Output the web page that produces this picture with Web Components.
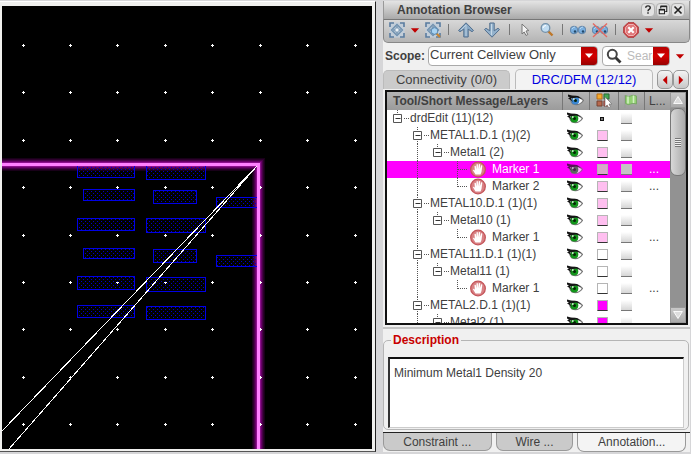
<!DOCTYPE html>
<html lang="en">
<head>
<meta charset="utf-8">
<title>Annotation Browser</title>
<style>
html, body { height: 100%; }
body { margin: 0; background: #d6d6d8; overflow: hidden; font: 12px/16px "Liberation Sans", Arial, sans-serif; color: #404040; }
</style>
</head>
<body>
<cad-window>
  <layout-canvas slot="canvas"></layout-canvas>
  <annotation-title slot="panel">Annotation Browser</annotation-title>
  <annotation-toolbar slot="panel"></annotation-toolbar>
  <scope-bar slot="panel"></scope-bar>
  <view-tabs slot="panel"></view-tabs>
  <result-tree slot="panel"></result-tree>
  <message-box slot="panel" label="Description">Minimum Metal1 Density 20</message-box>
  <dock-tabs slot="panel"></dock-tabs>
</cad-window>
<script>
const BASE = `<style>
:host,*{box-sizing:border-box}
button,input,select,textarea{font:inherit;color:inherit;margin:0;padding:0;border:0;background:none;border-radius:0}
button{display:flex;align-items:center;justify-content:center}
button:focus-visible,input:focus-visible,select:focus-visible{outline:1px dotted #333}
svg{display:block}
</style>`;
const define = (name, html, setup) => customElements.define(name, class extends HTMLElement {
  connectedCallback() {
    if (this.shadowRoot) return;
    const root = this.attachShadow({ mode: 'open' });
    root.innerHTML = BASE + (typeof html === 'function' ? html(this) : html);
    if (setup) setup(this, root);
  }
});

const frame = `<rect x=".5" y=".5" width="15" height="15" fill="#c3ced9"/><g fill="none" stroke="#5b7c9f" stroke-width="1.6"><path d="M1 5V1h4M11 1h4v4M15 11v4h-4M5 15H1v-4"/></g><path d="M8 2.500 13.500 8 8 13.500 2.500 8Z" fill="#dce5ec" stroke="#6d8ead" stroke-width="1.300"/><path d="M8 4v8M4 8h8" stroke="#6d8ead" stroke-width="1.500"/><path d="M6 6h4v4H6Z" fill="#edf2f6" stroke="#7d9ab5"/>`;
const eyes = `<g stroke="#55779b" stroke-width=".8"><circle cx="4" cy="8" r="3.800" fill="#79aede"/><circle cx="12" cy="8" r="3.800" fill="#79aede"/></g><circle cx="5" cy="9.500" r="1.200" fill="#234869"/><circle cx="13" cy="9.500" r="1.200" fill="#234869"/><path d="M2 7q1-2 3-2M10 7q1-2 3-2" stroke="#b9daf5" fill="none"/>`;
const eye = c => `<path d="M2 5Q9 1 15.500 7.500 11 13.500 5 11 3 9 2 5Z" fill="#fff" stroke="#777" stroke-width="1.200"/><circle cx="7.300" cy="7.500" r="4" fill="${c}"/><circle cx="7.500" cy="7.500" r="1.500" fill="#062306"/><circle cx="5.800" cy="6" r=".9" fill="#dff5df"/><path d="M0 1.500 4 2.500 10 3 14 6 9 4.500 3 5.500 5 9 2 6.500 0 5.500 2 4.500 0 3.500Z" fill="#151515"/>`;
const ICONS = {
  fit: frame,
  fitzoom: frame + `<path d="m11 11 4 4" stroke="#c68432" stroke-width="2.200"/><circle cx="9.500" cy="9" r="3.300" fill="#a9d3f2" stroke="#5989b2"/>`,
  up: `<path d="M8 .8 15.500 8.500l-1.500 1.200-3.800-2.500V15H5.800V7.200L2 9.700.5 8.500Z" fill="#88a8c5" stroke="#526f8e"/><path d="M8 3v11M3 8l5-5" stroke="#bfd2e2" fill="none"/>`,
  down: `<path d="M8 15.200.5 7.500 2 6.300l3.800 2.500V1h4.400v7.800L14 6.300l1.500 1.200Z" fill="#94b2cc" stroke="#526f8e"/><path d="M7.500 2v11" stroke="#c7d9e7"/>`,
  cursor: `<path d="M5 2v10l2.200-2 1.800 3.500 1.800-1L9 9l2.800-.5Z" fill="#f3f3f3" stroke="#777"/>`,
  zoom: `<path d="m9 9 4.500 4.500" stroke="#bd772a" stroke-width="2.400"/><circle cx="6.500" cy="6" r="4.300" fill="#c0dcf1" stroke="#7391aa" stroke-width="1.300"/><path d="M4 6q.5-2.500 3-2.500" stroke="#fff" fill="none"/>`,
  eyes,
  noeyes: eyes + `<path d="M1 1.500 15 15M15 1.500 1 15" stroke="#e36a62" stroke-width="1.400"/>`,
  clear: `<path d="M5 .7h6L15.300 5v6L11 15.300H5L.7 11V5Z" fill="#d24e50" stroke="#ae3a3d"/><path d="M5.500 2.500h5l3 3v5l-3 3h-5l-3-3v-5Z" fill="#e0787a" stroke="#efb3b3"/><path d="m5.300 5.300 5.400 5.400m0-5.400-5.400 5.400" stroke="#fff" stroke-width="2.200"/>`,
  drop: `<path d="M2.500 5.500h11l-5.500 6Z" fill="#c00000"/>`,
  wdrop: `<path d="M4 5.500h8l-4 4.500Z" fill="#fff"/>`,
  search: `<path d="m9.500 9.500 5 5" stroke="#333" stroke-width="2.800"/><circle cx="6.300" cy="6.300" r="4.500" fill="#fff" stroke="#444" stroke-width="2"/>`,
  help: `<path d="M5 5q0-2.500 3-2.500T11 5q0 1.500-1.500 2.300T8 9.500M8 11v2" fill="none" stroke="#222" stroke-width="1.900"/>`,
  restore: `<path d="M5 6V3h8v7h-2" fill="none" stroke="#222" stroke-width="1.400"/><path d="M5 3.200h8" stroke="#222" stroke-width="2"/><path d="M3 7.500h7V13H3Z" fill="#eee" stroke="#222" stroke-width="1.400"/><path d="M3 7.500h7" stroke="#222" stroke-width="2"/>`,
  close: `<path d="m4 4 8 8m0-8-8 8" stroke="#222" stroke-width="1.900"/>`,
  left: `<path d="M10.500 3v10L5.500 8Z" fill="#c00000"/>`,
  right: `<path d="M5.500 3v10l5-5Z" fill="#c00000"/>`,
  sup: `<path d="M3 12h10L8 4Z" fill="#ddd" stroke="#fff"/>`,
  sdown: `<path d="M3 4h10l-5 8Z" fill="#ddd" stroke="#fff"/>`,
  eyeg: eye('#12961a'),
  eyeb: eye('#3a86d2'),
  layers: `<path d="M1 1h5v5H1Z" fill="#f5ab2c" stroke="#b96d12"/><path d="M8 1h5v5H8Z" fill="#45a852" stroke="#2a6d35"/><path d="M1 8h5v5H1Z" fill="#b7694d" stroke="#774333"/><path d="M8 8h5v5H8Z" fill="#d35745" stroke="#903126"/><path d="M9 4v10l2.200-2 1.600 3 1.700-1-1.500-3H16Z" fill="#fff" stroke="#777" stroke-width=".7"/>`,
  flag: `<path d="M2 2v13" stroke="#999"/><path d="M2.500 2.500q3 2 5 .5t6 0v8q-4-1.500-6 0t-5-.5Z" fill="#93d073" stroke="#79a965"/><path d="M5 3.500v7M10.500 2.500v7.500" stroke="#d2f0c2" stroke-width="1.600"/>`,
  hand: `<circle cx="8" cy="8" r="7.300" fill="#d98184" stroke="#c4555a" stroke-width="1.300"/><path d="M5.500 13 2.800 8.600q.9-.9 2 .6L4.500 4.600q.8-.9 1.300 0L6.400 8 6.500 3q.8-.9 1.400 0L8 7.800 8.800 2.800q.9-.8 1.400.1L9.800 8l1.200-4q.9-.7 1.300.3l-.8 6.200-1 2.500Z" fill="#fff"/>`
};
const icon = (n, s = 16) => `<svg width="${s}" height="${s}" viewBox="0 0 16 16" aria-hidden="true">${ICONS[n]}</svg>`;

define('cad-window', `<style>
:host{display:grid;grid-template-columns:minmax(0,1fr) 307px;grid-template-rows:minmax(0,1fr);column-gap:7px;height:100vh;padding:1px 1px 2px 0}
.view{display:flex;min-height:0;background:#f0f0ee;border-right:1px solid #222;border-bottom:1px solid #555;border-top:1px solid #fff;padding:4px 3px 2px 2px}
.panel{display:flex;flex-direction:column;min-height:0;background:#f0f0f0}
</style><main class="view"><slot name="canvas"></slot></main><aside class="panel"><slot name="panel"></slot></aside>`);

define('layout-canvas', () => {
  const shapes = [[77,164,57,13],[77,218,57,12],[77,276,57,13],[77,305,57,12],[83,189,51,11],[83,248,51,10],
    [146,164,59,15],[146,218,59,14],[146,277,59,14],[146,306,59,13],[153,190,43,13],[153,249,43,13],[216,197,41,10],[216,255,41,11]];
  let dots = '';
  for (const x of [23,70,117,165,212,260,307,355]) for (const y of [45,92,140,187,235,282,329,377,424]) dots += `M${x - 1} ${y}h3v1h-3ZM${x} ${y - 1}h1v3h-1Z`;
  let glow = '';
  for (const [w, c] of [[13,'#180018'],[11,'#2c002c'],[9,'#480048'],[7,'#680068'],[5,'#8c108c'],[3,'#ff80ff']]) glow += `<path d="M-10 164.500H258.500V460" fill="none" stroke="${c}" stroke-width="${w}"/>`;
  return `<style>:host{display:block;flex:1;min-width:0;background:#000}svg{width:100%;height:100%}</style>
<svg viewBox="2 6 370 443" preserveAspectRatio="xMinYMin slice" shape-rendering="crispEdges" role="img" aria-label="Layout view">
<defs><pattern id="p" width="4" height="4" patternUnits="userSpaceOnUse"><path d="M1 1h1v1h-1ZM3 3h1v1h-1Z" fill="#0000c8"/></pattern></defs>
${glow}<path d="${dots}" fill="#fff"/>
${shapes.map(([x,y,w,h]) => `<rect x="${x + .5}" y="${y + .5}" width="${w}" height="${h}" fill="url(#p)" stroke="#0000e6"/>`).join('')}
<path d="M-10 164.500H258.500V460" fill="none" stroke="#ff80ff" stroke-width="3"/>
<path d="M257 166 2 431M257 166 9 449" stroke="#fff" fill="none"/></svg>`;
});

define('annotation-title', `<style>
:host{display:flex;align-items:center;height:19px;flex:none;padding:0 4px 0 13px;gap:1px;background:linear-gradient(#e4e4e4,#a9a9a9);border-bottom:1px solid #777;border-left:1px solid #999;border-right:1px solid #999}
h1{flex:1;margin:0;font-size:12px;line-height:16px;white-space:nowrap}
button{width:14px;height:14px;border:1px solid #b0b0b0;border-radius:4px;background:#e2e2e2}
button svg{flex:none}
</style><h1><slot></slot></h1><button aria-label="Help">${icon('help',12)}</button><button aria-label="Restore">${icon('restore',12)}</button><button aria-label="Close">${icon('close',14)}</button>`);

define('annotation-toolbar', `<style>
:host{display:flex;align-items:center;gap:6px;height:23px;flex:none;padding:0 5px 3px;background:linear-gradient(#d8d8d8,#b4b4b4);border:1px solid #888;border-top:0;border-radius:0 0 5px 5px}
button{width:16px;height:16px;flex:none}.d{width:8px}.a{width:20px}i{width:1px;height:11px;background:#777;margin:0 1px}
.d svg{flex:none}
</style>${[['fit','Fit'],['drop','Fit options','d'],['fitzoom','Zoom to fit'],0,['up','Previous','a'],['down','Next','a'],0,['cursor','Select'],['zoom','Zoom'],0,['eyes','Show'],['noeyes','Hide'],0,['clear','Clear'],['drop','Clear options','d']]
 .map(b => b ? `<button class="${b[2] || ''}" aria-label="${b[1]}">${icon(b[0], b[0] === 'drop' ? 12 : 16)}</button>` : '<i></i>').join('')}`);

define('scope-bar', `<style>
:host{display:flex;align-items:center;height:26px;flex:none;padding:0 4px 0 2px}
label{font-weight:bold;margin-right:3px}
.box{position:relative;display:flex;align-items:center;height:20px;border:1px solid #aaa;border-radius:4px;background:#fff;overflow:hidden}
.combo{flex:1;min-width:0}
select{appearance:none;width:100%;height:100%;padding:0 18px 2px 1px;font-size:13px}
.arrow{display:flex;align-items:center;justify-content:center;width:16px;height:100%;flex:none;background:linear-gradient(#b50000,#d40000 50%,#980000)}
.combo .arrow{position:absolute;right:0;top:0;pointer-events:none}
.search{width:68px;margin-left:4px;padding-left:3px}
.search svg{flex:none}
input{flex:1;width:0;min-width:0;margin-left:5px}input::placeholder{color:#bbb;opacity:1}
.more{width:12px;height:16px;margin-left:4px}
</style><label for="s">Scope:</label><span class="box combo"><select id="s"><option>Current Cellview Only</option></select><span class="arrow">${icon('wdrop')}</span></span>
<span class="box search">${icon('search')}<input type="text" placeholder="Search" aria-label="Search"><button class="arrow" aria-label="Search options">${icon('wdrop')}</button></span><button class="more" aria-label="More">${icon('drop',12)}</button>`);

define('view-tabs', `<style>
:host{display:flex;align-items:flex-end;height:20px;flex:none;padding-right:1px;font-size:13px}
.t{height:19px;border:1px solid #bbb;border-bottom:0;border-radius:5px 5px 0 0;background:#cbcbcb;flex:128 1 0;white-space:nowrap}
.t.on{flex:139 1 0;margin:0 4px 0 5px;height:20px;background:#f3f3f3;color:#0000e0}
.n{width:16px;height:19px;border:1px solid #999;border-radius:5px;background:linear-gradient(#f4f4f4,#c8c8c8)}
.n svg{flex:none}
</style><button class="t">Connectivity (0/0)</button><button class="t on">DRC/DFM (12/12)</button><button class="n" aria-label="Scroll left">${icon('left',14)}</button><button class="n" aria-label="Scroll right">${icon('right',14)}</button>`);

define('tree-guide', el => {
  const l = +el.getAttribute('level'), x = 10.5 + 20 * l, last = el.hasAttribute('last');
  const d = (l >= 1 ? 'M30.500 0V17' : '') + (l === 3 ? `M70.500 0V${last ? 9 : 17}M70.500 8.500H81` : `M${x} 0V4M${x + 6} 8.500h5`);
  const box = l < 3 ? `<path d="M${x - 4} 4.500h8v8h-8Z" fill="#fff" stroke="#555"/><path d="M${x - 2} 8.500h5" stroke="#333"/>` : '';
  const w = l < 3 ? 23 + 20 * l : 105;
  return `<style>:host{display:block;flex:none}</style><svg width="${w}" height="17" viewBox="0 0 ${w} 17" aria-hidden="true"><path d="${d}" fill="none" stroke="#555" stroke-dasharray="1 1" shape-rendering="crispEdges"/>${box}${l === 3 ? `<g transform="translate(83 .5)">${ICONS.hand}</g>` : ''}</svg>`;
});

const P = '#ffbff0', W = '#ffffff', M = '#ff00ff';
const ROWS = [[0,'drdEdit (11)(12)',''],[1,'METAL1.D.1 (1)(2)',P],[2,'Metal1 (2)',P],[3,'Marker 1',P,'sel'],[3,'Marker 2',P,'last'],
  [1,'METAL10.D.1 (1)(1)',P],[2,'Metal10 (1)',P],[3,'Marker 1',P,'last'],[1,'METAL11.D.1 (1)(1)',W],[2,'Metal11 (1)',W],[3,'Marker 1',W,'last'],[1,'METAL2.D.1 (1)(1)',M],[2,'Metal2 (1)',M]];
define('result-tree', `<style>
:host{display:flex;flex:1;min-height:0;margin:1px 2px 0 2px;border:2px solid #111;background:#fff;overflow:hidden}
.list{flex:1;min-width:0;overflow:hidden}
table{width:100%;table-layout:fixed;border-collapse:collapse}
th{height:18px;padding:0;background:linear-gradient(#b4b4b4,#9b9b9b);font-weight:normal;border-left:1px solid #777;white-space:nowrap;overflow:hidden}
th:first-child{text-align:left;padding-left:6px;font-weight:bold;border:0}
th svg{margin:auto}
td{height:17px;padding:0;line-height:17px;white-space:nowrap}
.name{display:flex;height:17px;overflow:hidden}
td button{width:16px;height:16px;margin:0 0 0 5px}
.sw{display:block;width:11px;height:11px;margin-left:8px;border:1px solid #b5b5b5;border-bottom-color:#333}
.sw.none{width:4px;height:4px;margin-left:11px;background:#777;border-color:#111}
input{appearance:none;display:block;width:11px;height:11px;margin-left:3px;background:linear-gradient(#fff,#d6d6d6);border-bottom:1px solid #777}
td:last-child{padding-left:5px}
.sel{background:#ff00ff;color:#fff}
.sel .sw{background:#d9a6cb!important}.sel input{background:#c5c5c5}
.sel td button{opacity:.7}
.bar{display:flex;flex-direction:column;width:16px;flex:none;background:#929292}
.bar button{width:16px;height:16px;background:linear-gradient(#c8c8c8,#aaa);border:1px solid #999}
.thumb{height:68px;border:1px solid #777;border-radius:7px;background:linear-gradient(90deg,#d8d8d8,#aaa);display:flex;align-items:center;justify-content:center}
.thumb::before{content:"";width:6px;height:9px;background:repeating-linear-gradient(#777 0 1px,#eee 1px 2px)}
.fill{flex:1}
</style><div class="list"><table><colgroup><col><col style="width:27px"><col style="width:29px"><col style="width:26px"><col style="width:26px"></colgroup>
<thead><tr><th>Tool/Short Message/Layers</th><th aria-label="Visible">${icon('eyeb')}</th><th aria-label="Layer">${icon('layers')}</th><th aria-label="Flag">${icon('flag')}</th><th>L...</th></tr></thead><tbody>
${ROWS.map(([l,t,c,f]) => `<tr class="${f === 'sel' ? 'sel' : ''}"><td><div class="name"><tree-guide level="${l}"${f === 'last' ? ' last' : ''}></tree-guide><span>${t}</span></div></td><td><button aria-label="Visibility of ${t}">${icon('eyeg')}</button></td><td><span class="sw${c ? '' : ' none'}" style="${c ? 'background:' + c : ''}"></span></td><td><input type="checkbox" aria-label="Flag ${t}"></td><td>${l === 3 ? '...' : ''}</td></tr>`).join('')}
</tbody></table></div><div class="bar"><button aria-label="Scroll up">${icon('sup',14)}</button><div class="thumb"></div><div class="fill"></div><button aria-label="Scroll down">${icon('sdown',14)}</button></div>`);

define('message-box', el => `<style>
:host{display:block;flex:none;margin-top:2px;padding:3px 1px 0 0;border-top:2px solid #c4c4c4}
fieldset{margin:0;padding:9px 4px 1px 4px;border:1px solid #b5b5b5;border-radius:5px;min-width:0}
legend{padding:0 2px;margin-left:3px;color:#c80000;font-weight:bold}
textarea{display:block;width:100%;height:71px;padding:6px 4px;resize:none;background:#fff;border:1px solid #ccc;border-top:2px solid #111;border-left:2px solid #333;outline:0}
</style><fieldset><legend>${el.getAttribute('label')}</legend><textarea aria-label="${el.getAttribute('label')}" readonly>${el.textContent.trim()}</textarea></fieldset>`);

define('dock-tabs', `<style>
:host{display:flex;flex:none;height:20px;margin-top:2px;gap:4px;padding-right:4px;border-top:1px solid #222}
button{flex:108 1 0;height:18px;background:#cacaca;border:1px solid #999;border-top:0;border-radius:0 0 7px 7px;white-space:nowrap}
.w{flex-grow:77}.on{height:19px;background:#f4f4f4}
</style><button>Constraint ...</button><button class="w">Wire ...</button><button class="on">Annotation...</button>`);
</script>
</body>
</html>
